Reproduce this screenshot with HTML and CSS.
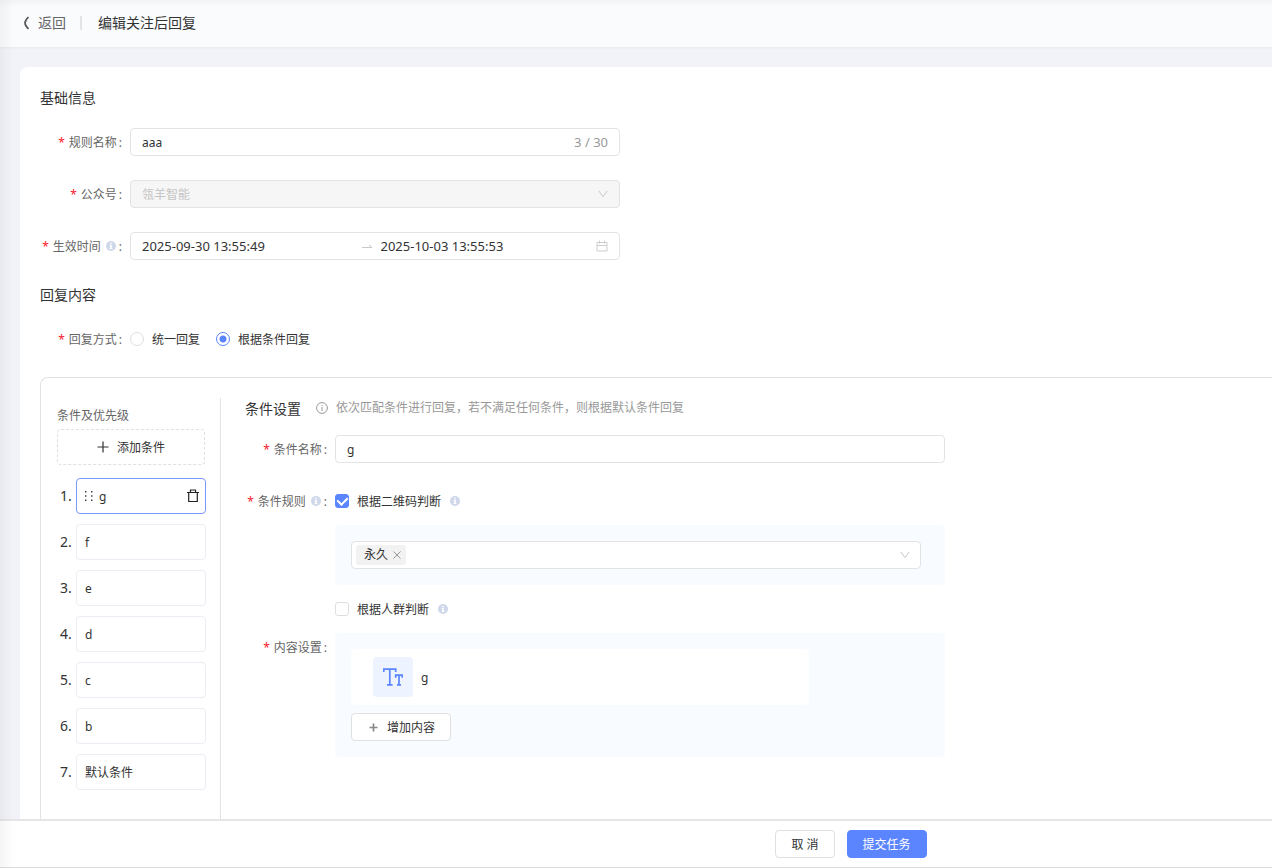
FILE: index.html
```html
<!DOCTYPE html>
<html lang="zh-CN">
<head>
<meta charset="utf-8">
<title>编辑关注后回复</title>
<link rel="stylesheet" href="styles.css">
</head>
<body>
<svg class="defs" aria-hidden="true">
  <symbol id="info" viewBox="0 0 10 10"><circle cx="5" cy="5" r="5" fill="#cfd8ea"/><path d="M4.200 1.700h1.600v1.500H4.200zM3.600 4.100h2.200v3h.6v1H3.600v-1h.6V5h-.6z" fill="#fff"/></symbol>
  <symbol id="down" viewBox="0 0 10 10"><path d="M.8 2 5 7.600 9.200 2" fill="none" stroke="#c6c6c6"/></symbol>
  <symbol id="plus" viewBox="0 0 12 12"><path d="M6 .5v11M.5 6h11" fill="none" stroke="currentColor" stroke-width="1.200"/></symbol>
</svg>
<header class="topbar">
  <a class="back" href="#"><svg width="8" height="14" viewBox="0 0 8 14"><path d="M6.500 1C4.200 3.200 3 5.200 3 7s1.200 3.800 3.500 6" fill="none" stroke="#555" stroke-width="1.700"/></svg>返回</a>
  <span class="divider"></span>
  <h1 class="page-title">编辑关注后回复</h1>
</header>
<main class="content">
  <form class="card" id="rule-form">
    <h2 class="section-title">基础信息</h2>
    <div class="row">
      <label class="label" for="rule-name"><i class="req">*</i>规则名称<span class="colon">:</span></label>
      <div class="field field-base"><input class="control" id="rule-name" type="text" value="aaa"><span class="count">3 / 30</span></div>
    </div>
    <div class="row">
      <label class="label" for="account"><i class="req">*</i>公众号<span class="colon">:</span></label>
      <div class="field field-base is-disabled"><select class="control" id="account" disabled><option>瓴羊智能</option></select><svg class="arrow" width="10" height="10"><use href="#down"/></svg></div>
    </div>
    <div class="row">
      <label class="label" for="start"><i class="req">*</i>生效时间<svg class="tip" width="10" height="10"><use href="#info"/></svg><span class="colon">:</span></label>
      <div class="field field-base">
        <input class="control date" id="start" type="text" value="2025-09-30 13:55:49">
        <svg class="range-arrow" width="12" height="8" viewBox="0 0 12 8"><path d="M1 5.500h10L8 3" fill="none" stroke="#c8c8c8"/></svg>
        <input class="control date" aria-label="结束时间" type="text" value="2025-10-03 13:55:53">
        <svg width="12" height="12" viewBox="0 0 12 12"><path d="M1 2.500h10v8.500H1zM1 5.500h10M3.500.5v3M8.500.5v3" fill="none" stroke="#cdcdcd"/></svg>
      </div>
    </div>
    <h2 class="section-title">回复内容</h2>
    <div class="row" role="radiogroup" aria-labelledby="mode-label">
      <span class="label" id="mode-label"><i class="req">*</i>回复方式<span class="colon">:</span></span>
      <label class="choice"><input class="radio" type="radio" name="mode">统一回复</label>
      <label class="choice"><input class="radio" type="radio" name="mode" checked>根据条件回复</label>
    </div>
    <div class="conditions">
      <aside class="side">
        <h3 class="side-title">条件及优先级</h3>
        <button class="add-condition" type="button"><svg width="12" height="12"><use href="#plus"/></svg>添加条件</button>
        <ol class="list">
          <li class="list-row"><span class="num">1.</span><div class="item is-active">
            <svg width="10" height="12" viewBox="0 0 10 12"><path d="M1 1h1.500v1.500H1zM7 1h1.500v1.500H7zM1 5.300h1.500v1.500H1zM7 5.300h1.500v1.500H7zM1 9.600h1.500v1.500H1zM7 9.600h1.500v1.500H7z" fill="#444"/></svg><span class="item-name">g</span>
            <button class="icon-button" type="button" aria-label="删除"><svg width="12" height="14" viewBox="0 0 12 14"><path d="M0 3.500h12M3.500 3.500v-2.500h5v2.500M1.700 3.500v9h8.600v-9" fill="none" stroke="#222" stroke-width="1.200"/></svg></button></div></li>
          <li class="list-row"><span class="num">2.</span><div class="item">f</div></li>
          <li class="list-row"><span class="num">3.</span><div class="item">e</div></li>
          <li class="list-row"><span class="num">4.</span><div class="item">d</div></li>
          <li class="list-row"><span class="num">5.</span><div class="item">c</div></li>
          <li class="list-row"><span class="num">6.</span><div class="item">b</div></li>
          <li class="list-row"><span class="num">7.</span><div class="item">默认条件</div></li>
        </ol>
      </aside>
      <section class="detail">
        <div class="detail-head">
          <h3 class="detail-title">条件设置</h3>
          <p class="hint"><svg width="12" height="12" viewBox="0 0 12 12"><circle cx="6" cy="6" r="5.400" fill="none" stroke="#999"/><path d="M6 5v4M6 3v1.200" stroke="#999"/></svg>依次匹配条件进行回复，若不满足任何条件，则根据默认条件回复</p>
        </div>
        <div class="row">
          <label class="label" for="cond-name"><i class="req">*</i>条件名称<span class="colon">:</span></label>
          <div class="field field-wide"><input class="control" id="cond-name" type="text" value="g"></div>
        </div>
        <div class="row row-rules">
          <span class="label"><i class="req">*</i>条件规则<svg class="tip" width="10" height="10"><use href="#info"/></svg><span class="colon">:</span></span>
          <div class="stack">
            <label class="choice"><input class="check" type="checkbox" checked>根据二维码判断<svg class="tip-after" width="10" height="10"><use href="#info"/></svg></label>
            <div class="panel">
              <div class="field tags"><span class="tag">永久<button class="tag-close" type="button" aria-label="移除"><svg width="8" height="8" viewBox="0 0 8 8"><path d="m.5.5 7 7m0-7-7 7" fill="none" stroke="#999"/></svg></button></span><input class="control" type="text" role="combobox" aria-expanded="false" aria-label="选择二维码"><svg class="arrow" width="10" height="10"><use href="#down"/></svg></div>
            </div>
            <label class="choice"><input class="check" type="checkbox">根据人群判断<svg class="tip-after" width="10" height="10"><use href="#info"/></svg></label>
          </div>
        </div>
        <div class="row">
          <span class="label"><i class="req">*</i>内容设置<span class="colon">:</span></span>
          <div class="panel">
            <div class="message">
              <span class="message-icon"><svg width="20" height="18" viewBox="0 0 20 18"><path d="M.8 4V1.200h11.900V4M6.800 1.200v15.600M4 16.800h5.600M12.700 9.700V7.200h6.600v2.500M16 7.200v9.600M14 16.800h4" fill="none" stroke="#5b84ff" stroke-width="1.700"/></svg></span>
              <span>g</span>
            </div>
            <button class="button button-content" type="button"><svg width="9" height="9" viewBox="0 0 9 9"><path d="M4.500.5v8M.5 4.500h8" stroke="#888" stroke-width="1.700"/></svg>增加内容</button>
          </div>
        </div>
      </section>
    </div>
  </form>
</main>
<footer class="footer">
  <button class="button" type="button">取 消</button>
  <button class="button button-primary" type="submit" form="rule-form">提交任务</button>
</footer>
</body>
</html>
```
FILE: styles.css
```css
* { box-sizing: border-box; }
body {
  margin: 0;
  height: 100vh;
  display: flex;
  flex-direction: column;
  background: #f2f3f9;
  border-bottom: 1px solid #dcdcdc;
  color: #333;
  font: 12px/21px "Noto Sans", "Noto Sans CJK SC", sans-serif;
  overflow: hidden;
}
body::after {
  content: "";
  position: absolute;
  inset: 0;
  pointer-events: none;
  background:
    linear-gradient(to right, rgba(0, 0, 0, .04), transparent 14px),
    linear-gradient(to bottom, rgba(0, 0, 0, .03), transparent 8px);
}
h1, h2, h3, p, ol { margin: 0; padding: 0; font-weight: 400; }
input, button, select { font: inherit; color: inherit; margin: 0; }
button { cursor: pointer; }
svg { flex: none; }
.defs { position: absolute; width: 0; height: 0; }

.topbar {
  flex: none;
  height: 47px;
  display: flex;
  align-items: center;
  padding: 0 22px 2px;
  background: #fafbfd;
  font-size: 14px;
  line-height: 22px;
  box-shadow: 0 1px 2px rgba(0, 0, 0, .04);
}
.back { display: flex; align-items: center; gap: 8px; color: #666; text-decoration: none; }
.divider { width: 2px; height: 14px; margin: 0 16px 0 14px; background: #e3e4e6; }
.page-title { font-size: 14px; }

.content { flex: 1; min-height: 0; padding: 20px 0 0 20px; overflow: hidden; }
.card { padding: 20px 0 20px 20px; background: #fff; border-radius: 8px 0 0 0; }
.section-title { font-size: 14px; line-height: 22px; margin-bottom: 19px; }
.row { display: flex; margin-bottom: 24px; }
.label {
  flex: none;
  width: 90px;
  height: 28px;
  padding-right: 8px;
  display: flex;
  align-items: center;
  justify-content: flex-end;
  color: #666;
}
.req { margin-right: 4px; color: #f5222d; font-style: normal; }
.colon { margin-left: 2px; }
.tip { margin: 0 1px 0 5px; }
.tip-after { margin-left: 1px; }

.field {
  height: 28px;
  display: flex;
  align-items: center;
  padding: 0 11px;
  background: #fff;
  border: 1px solid #e3e3e3;
  border-radius: 4px;
}
.field-base { width: 490px; }
.field-wide { width: 610px; }
.control {
  flex: 1;
  min-width: 0;
  height: 21px;
  padding: 0;
  border: 0;
  outline: 0;
  background: transparent;
  appearance: none;
}
.control:disabled { color: #c4c4c4; opacity: 1; }
.is-disabled { background: #f6f6f6; }
.count, .date { font-size: 13px; line-height: 20px; }
.date { height: 20px; }
.count { color: #999; }
.range-arrow { margin: 0 8px 0 3px; }

.choice { display: flex; align-items: center; gap: 8px; height: 28px; margin-right: 16px; }
.radio, .check { appearance: none; width: 14px; height: 14px; border: 1px solid #dedede; background: #fff; }
.radio { border-radius: 50%; }
.radio:checked { border-color: #5b84ff; background: radial-gradient(circle, #5b84ff 3px, #fff 4px); }
.check { border-radius: 3px; display: grid; place-items: center; }
.check:checked { border-color: #5b84ff; background: #5b84ff; }
.check:checked::after {
  content: "";
  width: 5px;
  height: 8px;
  margin-bottom: 2px;
  border: solid #fff;
  border-width: 0 2px 2px 0;
  transform: rotate(45deg);
}

.conditions {
  display: flex;
  min-height: 480px;
  padding: 20px 0 0 16px;
  border: 1px solid #e3e3e3;
  border-right: 0;
  border-radius: 8px 0 0 0;
}
.side { flex: none; width: 164px; padding: 7px 14px 0 0; border-right: 1px solid #e3e3e3; }
.side-title { font-size: 12px; color: #666; margin-bottom: 3px; }
.add-condition {
  width: 148px;
  height: 36px;
  display: flex;
  align-items: center;
  justify-content: center;
  gap: 8px;
  background: #fff;
  border: 1px dashed #e0e0e0;
  border-radius: 4px;
}
.list { display: grid; gap: 10px; margin-top: 13px; list-style: none; }
.list-row { display: flex; align-items: center; }
.num { width: 19px; padding-left: 3px; font-size: 14px; line-height: 20px; white-space: nowrap; }
.item {
  flex: 1;
  height: 36px;
  display: flex;
  align-items: center;
  padding: 0 6px 0 8px;
  border: 1px solid #eaedf4;
  border-radius: 4px;
}
.is-active { border-color: #7999ff; padding-left: 7px; }
.item-name { flex: 1; margin-left: 5px; }
.icon-button, .tag-close { display: flex; padding: 0; border: 0; background: transparent; }

.detail { flex: 1; padding-left: 24px; }
.detail-head { display: flex; align-items: center; height: 22px; margin-bottom: 15px; }
.detail-title { font-size: 14px; line-height: 22px; margin-right: 15px; }
.hint { display: flex; align-items: center; gap: 8px; padding-bottom: 2px; line-height: 20px; color: #999; }
.row-rules { margin-bottom: 10px; }
.stack { display: grid; gap: 10px; }
.panel { width: 610px; padding: 16px 24px 16px 16px; background: #f8fbff; border-radius: 4px; }
.tags { padding: 0 10px 0 4px; }
.tag {
  height: 20px;
  display: flex;
  align-items: center;
  gap: 5px;
  padding: 0 5px 0 8px;
  background: #f2f2f2;
  border-radius: 3px;
  line-height: 20px;
}
.message {
  width: 458px;
  height: 56px;
  display: flex;
  align-items: center;
  gap: 8px;
  margin-bottom: 8px;
  padding-left: 22px;
  background: #fff;
  border-radius: 4px;
}
.message-icon { width: 40px; height: 40px; display: grid; place-items: center; background: #edf3ff; border-radius: 4px; }

.button {
  height: 28px;
  padding: 0 15px;
  display: flex;
  align-items: center;
  gap: 9px;
  background: #fff;
  border: 1px solid #e0e0e0;
  border-radius: 4px;
}
.button-content { padding: 0 15px 0 17px; }
.button-primary { background: #5b84ff; border-color: #5b84ff; color: #fff; }
.footer {
  flex: none;
  height: 48px;
  display: flex;
  align-items: center;
  justify-content: center;
  gap: 12px;
  padding-left: 430px;
  background: #fff;
  border-top: 2px solid #e6e6e6;
}
```
